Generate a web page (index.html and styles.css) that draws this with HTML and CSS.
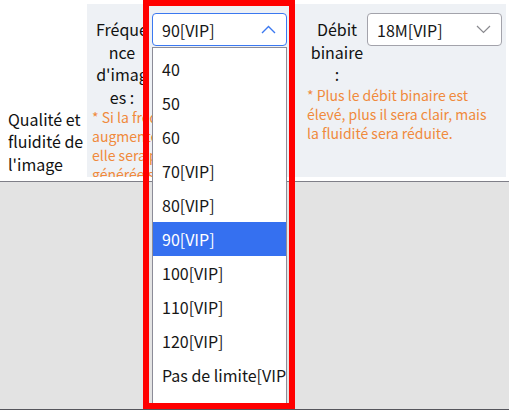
FILE: index.html
```html
<!DOCTYPE html>
<html lang="fr">
<head>
    <meta charset="UTF-8">
    <meta name="viewport" content="width=device-width, initial-scale=1.0">
    <title>Qualité et fluidité de l'image</title>
    <link rel="stylesheet" href="styles.css">
</head>
<body>
    <div class="settings">
        <div class="row-label">Qualité et fluidité de l'image</div>

        <div class="panel">
            <!-- Frame rate -->
            <div class="field">
                <div class="field-label">Fréquence d'images :</div>
                <div class="select-wrap">
                    <div class="select open">
                        <span>90[VIP]</span>
                        <svg class="chevron" width="15" height="9" viewBox="0 0 15 9"><path d="M1 8L7.5 1.5L14 8" fill="none" stroke="currentColor" stroke-width="1.4"/></svg>
                    </div>
                    <ul class="dropdown">
                        <li>40</li>
                        <li>50</li>
                        <li>60</li>
                        <li>70[VIP]</li>
                        <li>80[VIP]</li>
                        <li class="active">90[VIP]</li>
                        <li>100[VIP]</li>
                        <li>110[VIP]</li>
                        <li>120[VIP]</li>
                        <li>Pas de limite[VIP]</li>
                    </ul>
                </div>
                <p class="hint nowrap">* Si la fréquence d'images est<br>augmentée, l'image sera plus fluide,<br>elle sera plus lourde et la charge<br>générée sera plus élevée.</p>
            </div>

            <!-- Bitrate -->
            <div class="field">
                <div class="field-label">Débit binaire :</div>
                <div class="select-wrap">
                    <div class="select">
                        <span>18M[VIP]</span>
                        <svg class="chevron" width="15" height="9" viewBox="0 0 15 9"><path d="M1 1L7.5 7.5L14 1" fill="none" stroke="currentColor" stroke-width="1.2"/></svg>
                    </div>
                </div>
                <p class="hint short">* Plus le débit binaire est élevé, plus il sera clair, mais la fluidité sera réduite.</p>
            </div>
        </div>
    </div>
    <div class="backdrop"></div>

    <div class="highlight"></div>
</body>
</html>
```

FILE: styles.css
```css
/* Global */
body {
    margin: 0;
    font-family: "Noto Sans CJK SC", "Noto Sans", sans-serif;
    color: #111;
    background: #fff;
}

/* Settings row */
.settings {
    display: flex;
    height: 181px;
    border-bottom: 1px solid #7f7f88;
}

.row-label {
    width: 79px;
    padding-left: 8px;
    padding-bottom: 6px;
    align-self: flex-end;
    font-size: 16px;
    line-height: 22.5px;
}

.panel {
    display: flex;
    gap: 20px;
    width: 414px;
    height: 173px;
    margin-top: 4px;
    padding-left: 5px;
    background: #eef1f5;
}

.field {
    display: grid;
    grid-template-columns: 60px 135px;
    grid-template-rows: auto minmax(0, 1fr);
    box-sizing: border-box;
    height: 173px;
    padding-top: 9px;
}

.field-label {
    margin-top: 5px;
    font-size: 16px;
    line-height: 22.5px;
    text-align: center;
    overflow-wrap: anywhere;
}

/* Select boxes */
.select-wrap {
    position: relative;
}

.select {
    display: flex;
    align-items: center;
    justify-content: space-between;
    box-sizing: border-box;
    height: 33px;
    padding: 0 10px 0 9px;
    border: 1px solid #a3a3ab;
    border-radius: 4px;
    background: #fff;
    font-size: 16px;
    color: #161616;
}

.select .chevron {
    color: #8a8a8f;
}

.select.open {
    border-color: #3b78f0;
}

.select.open .chevron {
    color: #3b78f0;
}

.dropdown {
    position: absolute;
    top: 34px;
    left: 0;
    z-index: 2;
    box-sizing: border-box;
    width: 135px;
    height: 362px;
    margin: 0;
    padding: 4px 0 0;
    list-style: none;
    background: #fff;
    border: 1px solid #8c8c98;
    border-bottom: none;
}

.dropdown li {
    height: 34px;
    padding-left: 9px;
    font-size: 16px;
    line-height: 34px;
    white-space: nowrap;
    overflow: hidden;
    color: #161616;
}

.dropdown li.active {
    background: #3570f0;
    color: #fff;
}

.hint {
    grid-column: 1 / 3;
    margin: 0;
    overflow: hidden;
    font-size: 14px;
    line-height: 19px;
    color: #f08a3c;
}

.hint.nowrap {
    white-space: nowrap;
}

.hint.short {
    max-width: 186px;
}

/* Lower area */
.backdrop {
    height: 227px;
    background: #e3e3e3;
    border-bottom: 1px solid #55555c;
}

/* Red annotation frame */
.highlight {
    position: absolute;
    top: 0;
    left: 143px;
    z-index: 3;
    box-sizing: border-box;
    width: 152px;
    height: 409px;
    border: 6px solid #ff0000;
}
```
